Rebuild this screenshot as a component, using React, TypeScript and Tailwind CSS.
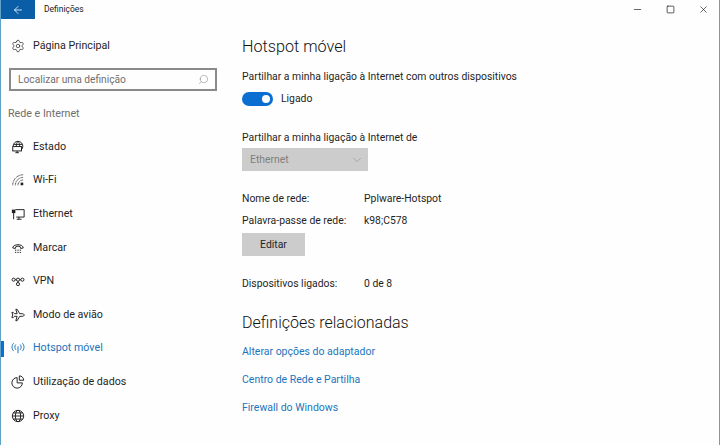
import { ArrowLeft, Search, Settings, ChevronDown, Minus, Square, X } from 'lucide-react';
import type { ReactNode } from 'react';

const font = { fontFamily: 'Roboto, sans-serif' };

function Svg({ children }: { children: ReactNode }) {
  return (
    <svg width="14" height="14" viewBox="0 0 16 16" fill="none" stroke="currentColor" strokeWidth="1.1">
      {children}
    </svg>
  );
}

const navItems: { label: string; icon: ReactNode; active?: boolean }[] = [
  {
    label: 'Estado',
    icon: (
      <Svg>
        <path d="M2.500 7a5.500 5.500 0 0 1 11 0c0 1.500-.5 3-1.500 4" />
        <path d="M8 1.500c-1.500 1.500-2 3.500-2 6M8 1.500c1.500 1.500 2 3.500 2 6M3 5h10" />
        <rect x="2" y="7.500" width="10" height="5" />
        <path d="M5 14.500h4M7 12.500v2" />
      </Svg>
    ),
  },
  {
    label: 'Wi-Fi',
    icon: (
      <Svg>
        <path d="M2 14A12 12 0 0 1 14 2" strokeDasharray="1 .6" />
        <path d="M5 14a9 9 0 0 1 9-9" strokeDasharray="1 .6" />
        <path d="M8 14a6 6 0 0 1 6-6" strokeDasharray="1 .6" />
        <rect x="11" y="11" width="3" height="3" fill="currentColor" stroke="none" />
      </Svg>
    ),
  },
  {
    label: 'Ethernet',
    icon: (
      <Svg>
        <path d="M5 3h10v8.500H6" />
        <path d="M9 11.500v2.500M6.500 14h5.500" />
        <rect x="1" y="3" width="4" height="4" fill="currentColor" stroke="none" />
        <path d="M3 7v7" />
      </Svg>
    ),
  },
  {
    label: 'Marcar',
    icon: (
      <Svg>
        <path d="M2 8c0-5 12-5 12 0l-3 .5-.5-2c-2-.8-3-.8-5 0L5 8.500z" />
        <path d="M4.500 10.500h1.500M7.250 10.500h1.500M10 10.500h1.500M4.500 13h1.500M7.250 13h1.500M10 13h1.500" />
      </Svg>
    ),
  },
  {
    label: 'VPN',
    icon: (
      <Svg>
        <circle cx="3" cy="6.500" r="1.800" />
        <circle cx="13" cy="6.500" r="1.800" />
        <circle cx="8" cy="11.500" r="1.800" />
        <circle cx="8" cy="6.500" r="1.800" />
        <path d="M4.800 6.500h1.400M9.800 6.500h1.400M8 8.300v1.400" />
      </Svg>
    ),
  },
  {
    label: 'Modo de avião',
    icon: (
      <Svg>
        <path d="M15 8c0-1-1-1.500-2-1.500h-3L7 1.500H5.500L7 6.500H4L2.500 5H1l1 3-1 3h1.500L4 9.500h3l-1.500 5H7l3-5h3c1 0 2-.5 2-1.500z" />
      </Svg>
    ),
  },
  {
    label: 'Hotspot móvel',
    active: true,
    icon: (
      <Svg>
        <path d="M8 6v8" />
        <path d="M5.500 4c-1.500 2-1.500 4 0 6M10.500 4c1.500 2 1.500 4 0 6M3 2.500c-2.500 3-2.500 6 0 9M13 2.500c2.500 3 2.500 6 0 9" />
      </Svg>
    ),
  },
  {
    label: 'Utilização de dados',
    icon: (
      <Svg>
        <path d="M7 3a6 6 0 1 0 6 6H7z" />
        <path d="M9.500 1a5 5 0 0 1 5 5h-5z" />
      </Svg>
    ),
  },
  {
    label: 'Proxy',
    icon: (
      <Svg>
        <circle cx="8" cy="8" r="6.500" />
        <ellipse cx="8" cy="8" rx="3" ry="6.500" />
        <path d="M1.500 8h13M2.500 4.500h11M2.500 11.500h11" />
      </Svg>
    ),
  },
];

function Sidebar() {
  return (
    <aside className="w-[229px] shrink-0 text-[#1f1f1f]">
      <div className="mt-[10px] flex h-[34px] items-center gap-[8px] pl-[10px] text-[10.7px]">
        <Settings size={14} strokeWidth={1.2} />
        <span>Página Principal</span>
      </div>
      <div className="ml-[8px] mt-[5px] flex h-[23px] w-[208px] items-center justify-between border-2 border-[#8a8a8a] pl-[7px] pr-[6px] text-[10.2px] text-[#6f6f6f]">
        <span>Localizar uma definição</span>
        <Search size={11} strokeWidth={1.2} className="-scale-x-100 text-[#888]" />
      </div>
      <div className="mb-[8px] ml-[7px] mt-[14px] text-[10.7px] leading-[17px] text-[#6f6f6f]">Rede e Internet</div>
      <nav>
        {navItems.map((item) => (
          <div
            key={item.label}
            className={`relative flex h-[33.6px] items-center gap-[8px] pl-[10px] text-[10.7px] ${item.active ? 'text-[#1b75bc]' : ''}`}
          >
            {item.active && <div className="absolute left-0 top-[9px] h-[16px] w-[3px] bg-[#0a6fd0]" />}
            {item.icon}
            <span>{item.label}</span>
          </div>
        ))}
      </nav>
    </aside>
  );
}

function Content() {
  return (
    <main className="flex-1 pl-[12px] text-[10.4px] leading-[16px] text-[#1f1f1f]">
      <h1 className="mt-[16px] text-[16.200px] font-light leading-[24px] text-[#111]">Hotspot móvel</h1>
      <p className="mt-[10px]">Partilhar a minha ligação à Internet com outros dispositivos</p>
      <div className="mt-[6px] flex items-center gap-[8px]">
        <div className="flex h-[14px] w-[31px] items-center justify-end rounded-full bg-[#0a6fd0] pr-[3px]">
          <div className="h-[8px] w-[8px] rounded-full bg-white" />
        </div>
        <span>Ligado</span>
      </div>
      <p className="mt-[23px]">Partilhar a minha ligação à Internet de</p>
      <div className="mt-[2px] flex h-[23px] w-[126px] items-center justify-between bg-[#cccccc] pl-[8px] pr-[4px] text-[#808080]">
        <span>Ethernet</span>
        <ChevronDown size={14} strokeWidth={1} className="text-[#8c8c8c]" />
      </div>
      <div className="mt-[20px] grid grid-cols-[122px_1fr] gap-y-[6px]">
        <span>Nome de rede:</span>
        <span>Pplware-Hotspot</span>
        <span>Palavra-passe de rede:</span>
        <span>k98;C578</span>
      </div>
      <button className="mt-[4px] block h-[23px] w-[63px] bg-[#cccccc]">Editar</button>
      <div className="mt-[20px] grid grid-cols-[122px_1fr]">
        <span>Dispositivos ligados:</span>
        <span>0 de 8</span>
      </div>
      <h2 className="mt-[19px] text-[16px] font-light leading-[24px] text-[#111]">Definições relacionadas</h2>
      <div className="mt-[9px] flex flex-col gap-[12px] text-[10.500px] text-[#1b75bc]">
        <a>Alterar opções do adaptador</a>
        <a>Centro de Rede e Partilha</a>
        <a>Firewall do Windows</a>
      </div>
    </main>
  );
}

export default function App() {
  return (
    <div style={font} className="h-[445px] w-[720px] overflow-hidden border-x border-x-[#5fa3c9] bg-[#fefefe]">
      <header className="flex h-[19px] items-center">
        <div className="flex h-full w-[34px] items-center justify-center bg-[#0a5ea8] text-white">
          <ArrowLeft size={12} strokeWidth={1.6} />
        </div>
        <span className="ml-[9px] text-[8.500px] text-[#222]">Definições</span>
        <div className="ml-auto flex items-center gap-[23px] pr-[10px] text-[#111]">
          <Minus size={11} strokeWidth={1.4} />
          <Square size={9} strokeWidth={1.8} />
          <X size={11} strokeWidth={1.4} />
        </div>
      </header>
      <div className="flex">
        <Sidebar />
        <Content />
      </div>
    </div>
  );
}
